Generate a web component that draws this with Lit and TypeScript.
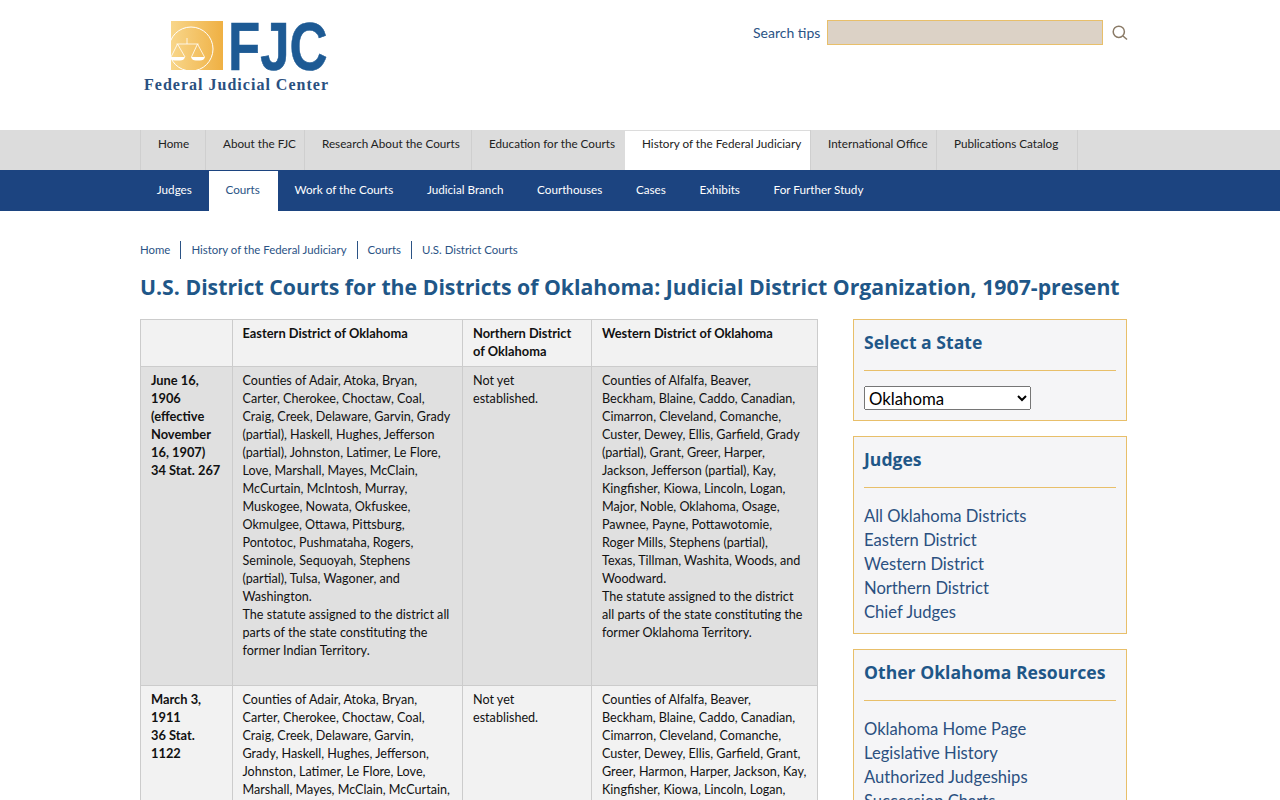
import { LitElement, html, css } from "lit";
import { customElement } from "lit/decorators.js";

const top = [
  ["Home", 65], ["About the FJC", 99], ["Research About the Courts", 167], ["Education for the Courts", 154],
  ["History of the Federal Judiciary", 185], ["International Office", 126], ["Publications Catalog", 141],
];
const sub = ["Judges", "Courts", "Work of the Courts", "Judicial Branch", "Courthouses", "Cases", "Exhibits", "For Further Study"];
const lines = (s: string) => s.split("|").map((l) => html`${l}<br />`);

const rows = [
  {
    cls: "odd",
    date: "June 16,|1906|(effective|November|16, 1907)|34 Stat. 267",
    east: "Counties of Adair, Atoka, Bryan,|Carter, Cherokee, Choctaw, Coal,|Craig, Creek, Delaware, Garvin, Grady|(partial), Haskell, Hughes, Jefferson|(partial), Johnston, Latimer, Le Flore,|Love, Marshall, Mayes, McClain,|McCurtain, McIntosh, Murray,|Muskogee, Nowata, Okfuskee,|Okmulgee, Ottawa, Pittsburg,|Pontotoc, Pushmataha, Rogers,|Seminole, Sequoyah, Stephens|(partial), Tulsa, Wagoner, and|Washington.|The statute assigned to the district all|parts of the state constituting the|former Indian Territory.",
    north: "Not yet|established.",
    west: "Counties of Alfalfa, Beaver,|Beckham, Blaine, Caddo, Canadian,|Cimarron, Cleveland, Comanche,|Custer, Dewey, Ellis, Garfield, Grady|(partial), Grant, Greer, Harper,|Jackson, Jefferson (partial), Kay,|Kingfisher, Kiowa, Lincoln, Logan,|Major, Noble, Oklahoma, Osage,|Pawnee, Payne, Pottawotomie,|Roger Mills, Stephens (partial),|Texas, Tillman, Washita, Woods, and|Woodward.|The statute assigned to the district|all parts of the state constituting the|former Oklahoma Territory.",
  },
  {
    cls: "even",
    date: "March 3,|1911|36 Stat.|1122",
    east: "Counties of Adair, Atoka, Bryan,|Carter, Cherokee, Choctaw, Coal,|Craig, Creek, Delaware, Garvin,|Grady, Haskell, Hughes, Jefferson,|Johnston, Latimer, Le Flore, Love,|Marshall, Mayes, McClain, McCurtain,",
    north: "Not yet|established.",
    west: "Counties of Alfalfa, Beaver,|Beckham, Blaine, Caddo, Canadian,|Cimarron, Cleveland, Comanche,|Custer, Dewey, Ellis, Garfield, Grant,|Greer, Harmon, Harper, Jackson, Kay,|Kingfisher, Kiowa, Lincoln, Logan,",
  },
];

@customElement("app-root")
export class AppRoot extends LitElement {
  static styles = css`
    :host { display: block; height: 800px; overflow: hidden; background: #fff; font-family: "Lato", "Liberation Sans", sans-serif; color: #111; }
    a { color: inherit; text-decoration: none; }
    .header { height: 130px; width: 1000px; margin: 0 auto; display: flex; justify-content: space-between; }
    .logo { display: block; flex: none; }
    .search { display: flex; align-items: flex-start; padding-top: 20px; margin-right: 10px; }
    .tips { flex: none; font-size: 14px; line-height: 26px; color: #2b5385; width: 74px; white-space: nowrap; }
    .box { flex: none; width: 276px; height: 25px; box-sizing: border-box; background: #dcd2c6; border: 1px solid #e8bf6a; }
    .mag { flex: none; margin: 4px 0 0 9px; }
    .nav1 { height: 40px; background: #dcdcdc; }
    .bar { width: 1000px; margin: 0 auto; display: flex; }
    .nav1 .it { box-sizing: border-box; height: 40px; border-left: 1px solid #cfcfcf; padding: 6px 0 0 17px; font-size: 11.7px; line-height: 14px; white-space: nowrap; color: #222; }
    .nav1 .it.active { background: #fff; border-left: 0; margin-top: 1px; height: 39px; padding-top: 5px; }
    .nav1 .end { border-left: 1px solid #cfcfcf; }
    .nav2 { height: 41px; background: #1c4480; }
    .nav2 .it { padding: 0 16.8px; font-size: 11.7px; line-height: 39px; height: 41px; color: #fff; white-space: nowrap; }
    .nav2 .it.active { box-sizing: border-box; width: 69px; background: #fff; color: #2b5385; box-shadow: inset 0 1px 0 #1c4480; }
    .crumbs { width: 1000px; margin: 0 auto; display: flex; padding-top: 30px; font-size: 11.4px; line-height: 18px; color: #2b5385; }
    .crumbs a { padding: 0 10px; border-left: 1px solid #2b5385; white-space: nowrap; }
    .crumbs a:first-child { padding-left: 0; border-left: 0; }
    h1 { width: 1000px; margin: 13px auto 0; font: bold 21.25px/30px "Open Sans", sans-serif; color: #1f5788; white-space: nowrap; }
    .main { width: 1000px; margin: 17px auto 0; display: flex; align-items: flex-start; }
    table { flex: none; border-collapse: collapse; table-layout: fixed; width: 677px; font-size: 12.6px; line-height: 18px; }
    td, th { border: 1px solid #ccc; padding: 5px 10px 25px; text-align: left; vertical-align: top; white-space: nowrap; color: #111; }
    th { padding-top: 4px; padding-bottom: 26px; font-weight: bold; font-size: 12.85px; }
    .east { padding-left: 9.5px; }
    thead th { background: #f2f2f2; padding-bottom: 6px; }
    .odd td, .odd th { background: #e0e0e0; }
    .even td, .even th { background: #f2f2f2; }
    aside { flex: none; width: 274px; margin-left: 35px; display: flex; flex-direction: column; gap: 15px; }
    .panel { border: 1px solid #e8bf6a; background: #f5f5f7; padding: 0 10px 10px; }
    h2 { margin: 0; padding: 8px 0 14px; font: bold 17.6px/28px "Open Sans", sans-serif; color: #1f5788; border-bottom: 1px solid #e8bf6a; white-space: nowrap; }
    select { display: block; margin: 15px 0 0; width: 167px; height: 24px; font: 16.8px "Lato", sans-serif; }
    .links { margin: 16px 0 -1px; font-size: 16.6px; line-height: 24px; color: #2b5080; }
    .links a { display: block; }
  `;

  render() {
    return html`
      <div class="header">
        <svg class="logo" width="200" height="100" viewBox="140 0 200 100" role="img" aria-label="Federal Judicial Center logo">
          <defs>
            <linearGradient id="g" x1="0" y1="0" x2="1" y2="0"><stop offset="0" stop-color="#f8d68a" /><stop offset="1" stop-color="#efb043" /></linearGradient>
            <clipPath id="c"><rect x="171" y="21" width="52" height="49" /></clipPath>
          </defs>
          <rect x="171" y="21" width="52" height="49" fill="url(#g)" />
          <g clip-path="url(#c)" fill="none" stroke="#fff" stroke-width="1">
            <circle cx="191" cy="49" r="22" />
            <path d="M187 38v6M176.5 44h22M177.5 44l-6.5 13M177.5 44l7.5 13M197.5 44l-6 13M197.5 44l7 13" stroke-width="0.8" />
            <path d="M170 57h15q-1 3.5-5 3.5h-5q-4 0-5-3.5zM191 57h14q-1 3.5-5 3.5h-4q-4 0-5-3.5z" fill="#fff" stroke="none" />
          </g>
          <text x="228" y="70" font-family="Liberation Sans" font-weight="bold" font-size="69" fill="#1d5a94" stroke="#1d5a94" stroke-width="0.6" textLength="99.5" lengthAdjust="spacingAndGlyphs">FJC</text>
          <text x="144" y="90" font-family="Liberation Serif" font-weight="bold" font-size="16" fill="#2a5080" textLength="184">Federal Judicial Center</text>
        </svg>
        <div class="search">
          <a class="tips" href="#">Search tips</a>
          <div class="box"></div>
          <svg class="mag" width="18" height="18" viewBox="0 0 18 18" fill="none" stroke="#8a7a66" stroke-width="1.5"><circle cx="6.8" cy="7.8" r="5.6" /><path d="M11 12l4 3.5" /></svg>
        </div>
      </div>
      <div class="nav1"><div class="bar">
        ${top.map(([t, w]) => html`<a href="#" class="it ${t === "History of the Federal Judiciary" ? "active" : ""}" style="width:${w}px">${t}</a>`)}
        <div class="end"></div>
      </div></div>
      <div class="nav2"><div class="bar">
        ${sub.map((t) => html`<a href="#" class="it ${t === "Courts" ? "active" : ""}">${t}</a>`)}
      </div></div>
      <div class="crumbs">
        <a href="#">Home</a><a href="#">History of the Federal Judiciary</a><a href="#">Courts</a><a href="#">U.S. District Courts</a>
      </div>
      <h1>U.S. District Courts for the Districts of Oklahoma: Judicial District Organization, 1907-present</h1>
      <div class="main">
        <table>
          <colgroup><col style="width:92px" /><col style="width:230px" /><col style="width:129px" /><col style="width:226px" /></colgroup>
          <thead><tr>
            <th></th><th class="east">Eastern District of Oklahoma</th><th>Northern District<br />of Oklahoma</th><th>Western District of Oklahoma</th>
          </tr></thead>
          <tbody>
            ${rows.map((r) => html`<tr class="${r.cls}">
              <th>${lines(r.date)}</th><td class="east">${lines(r.east)}</td><td>${lines(r.north)}</td><td>${lines(r.west)}</td>
            </tr>`)}
          </tbody>
        </table>
        <aside>
          <div class="panel">
            <h2>Select a State</h2>
            <select><option>Oklahoma</option></select>
          </div>
          <div class="panel">
            <h2>Judges</h2>
            <div class="links">
              <a href="#">All Oklahoma Districts</a><a href="#">Eastern District</a><a href="#">Western District</a><a href="#">Northern District</a><a href="#">Chief Judges</a>
            </div>
          </div>
          <div class="panel">
            <h2>Other Oklahoma Resources</h2>
            <div class="links">
              <a href="#">Oklahoma Home Page</a><a href="#">Legislative History</a><a href="#">Authorized Judgeships</a><a href="#">Succession Charts</a>
            </div>
          </div>
        </aside>
      </div>
    `;
  }
}
